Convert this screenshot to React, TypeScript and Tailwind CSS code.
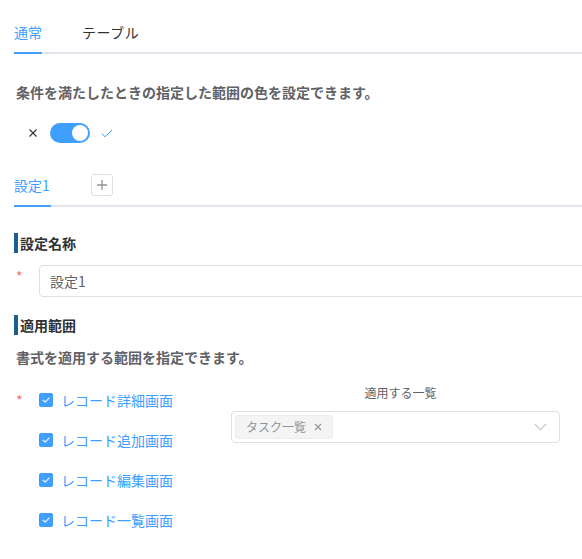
import React from 'react';

const font = { fontFamily: '"Noto Sans CJK JP", "Noto Sans", sans-serif' };

const Heading: React.FC<{ children: React.ReactNode }> = ({ children }) => (
  <div className="border-l-[4px] border-[#1b5e91] pl-[2px] h-[20px] leading-[20px] text-[14px] font-bold text-[#303133]">
    {children}
  </div>
);

const Check = () => (
  <span className="w-[14px] h-[14px] rounded-[2px] bg-[#409eff] flex items-center justify-center shrink-0">
    <svg width="10" height="10" viewBox="0 0 10 10" fill="none">
      <path d="M2.2 5.2 L4.2 7.1 L7.9 3.1" stroke="#e8f3ff" strokeWidth="1.3" strokeLinecap="round" strokeLinejoin="round" />
    </svg>
  </span>
);

const screens = ['レコード詳細画面', 'レコード追加画面', 'レコード編集画面', 'レコード一覧画面'];

export default function App() {
  return (
    <div className="w-full overflow-hidden bg-white" style={font}>
      <div className="w-[640px] pl-[14px] pb-[20px]">
        {/* main tabs */}
        <div className="mt-[13px] flex border-b-2 border-[#e4e7ed] text-[14px]">
          <div className="mr-[40px]">
            <div className="h-[39px] leading-[39px] text-[#409eff]">通常</div>
            <div className="h-[2px] -mb-[2px] bg-[#409eff]" />
          </div>
          <div>
            <div className="h-[39px] leading-[39px] text-[#303133] tracking-[0.5px]">テーブル</div>
          </div>
        </div>

        <p className="mt-[28px] pl-[2px] h-[20px] leading-[20px] text-[14px] font-bold text-[#606266]">
          条件を満たしたときの指定した範囲の色を設定できます。
        </p>

        {/* switch */}
        <div className="mt-[21px] flex items-center h-[20px]">
          <svg className="ml-[15px]" width="8" height="8" viewBox="0 0 8 8">
            <path d="M0.5 0.5 L7.5 7.5 M7.5 0.5 L0.5 7.5" stroke="#303133" strokeWidth="1.1" />
          </svg>
          <div className="ml-[13px] w-[40px] h-[20px] rounded-full bg-[#409eff] flex items-center justify-end pr-[2px]">
            <span className="w-[16px] h-[16px] rounded-full bg-white" />
          </div>
          <svg className="ml-[11px]" width="12" height="9" viewBox="0 0 12 9" fill="none">
            <path d="M0.8 4.6 L4.2 7.8 L11.2 0.8" stroke="#409eff" strokeWidth="1" />
          </svg>
        </div>

        {/* setting tabs */}
        <div className="mt-[22px] flex items-center border-b-2 border-[#e4e7ed] text-[14px]">
          <div>
            <div className="h-[40px] leading-[40px] text-[#409eff] pr-[1px]">設定1</div>
            <div className="h-[2px] -mb-[2px] bg-[#409eff]" />
          </div>
          <button className="ml-[40px] w-[22px] h-[22px] border border-[#dcdfe6] rounded-[3px] flex items-center justify-center">
            <svg width="12" height="12" viewBox="0 0 12 12">
              <path d="M6 1 V11 M1 6 H11" stroke="#909399" strokeWidth="1.3" />
            </svg>
          </button>
        </div>

        <div className="mt-[26px]">
          <Heading>設定名称</Heading>
        </div>

        <div className="mt-[12px] flex items-start">
          <span className="w-[25px] pl-[2px] pt-[4px] text-[14px] leading-[14px] text-[#f56c6c]">*</span>
          <div className="flex-1 h-[32px] border border-[#dcdfe6] rounded-[4px] pl-[10px] flex items-center text-[14px] text-[#606266]">
            設定1
          </div>
        </div>

        <div className="mt-[18px]">
          <Heading>適用範囲</Heading>
        </div>

        <p className="mt-[12px] pl-[2px] h-[20px] leading-[20px] text-[14px] font-bold text-[#606266]">
          書式を適用する範囲を指定できます。
        </p>

        <div className="mt-[13px] flex">
          <div className="w-[217px] flex">
            <span className="w-[25px] pl-[2px] pt-[13px] text-[14px] leading-[14px] text-[#f56c6c]">*</span>
            <div className="flex flex-col">
              {screens.map((s) => (
                <label key={s} className="h-[40px] flex items-center gap-[8px] text-[14px] leading-[16px] text-[#409eff]">
                  <Check />
                  <span className="-mt-[1px]">{s}</span>
                </label>
              ))}
            </div>
          </div>
          <div className="w-[329px]">
            <div className="mt-[3px] h-[20px] leading-[20px] text-center text-[12px] text-[#606266] pl-[10px]">適用する一覧</div>
            <div className="mt-[8px] h-[32px] border border-[#dcdfe6] rounded-[4px] flex items-center pl-[3px] pr-[12px]">
              <span className="h-[24px] px-[10px] rounded-[4px] bg-[#f4f4f5] border border-[#ececee] flex items-center gap-[8px] text-[12px] text-[#909399]">
                タスク一覧
                <svg width="8" height="8" viewBox="0 0 8 8">
                  <path d="M1 1 L7 7 M7 1 L1 7" stroke="#909399" strokeWidth="1.1" />
                </svg>
              </span>
              <span className="flex-1" />
              <svg width="13" height="8" viewBox="0 0 13 8" fill="none">
                <path d="M0.8 0.8 L6.5 6.6 L12.2 0.8" stroke="#c0c4cc" strokeWidth="1.1" />
              </svg>
            </div>
          </div>
        </div>
      </div>
    </div>
  );
}
